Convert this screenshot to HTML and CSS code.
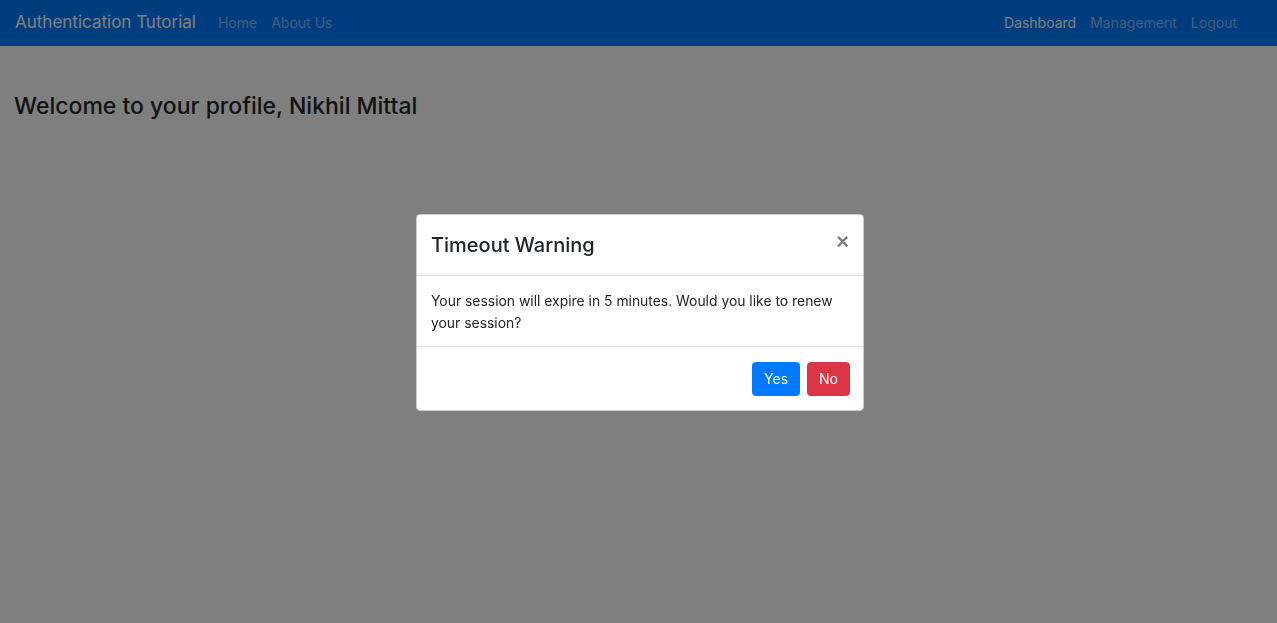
FILE: index.html
```html
<!DOCTYPE html>
<html lang="en">
<head>
<meta charset="utf-8">
<title>Authentication Tutorial</title>
<link rel="stylesheet" href="styles.css">
</head>
<body>
<nav class="navbar">
  <div class="nav-left">
    <a class="brand" href="#">Authentication Tutorial</a>
    <a class="nav-link" href="#">Home</a>
    <a class="nav-link" href="#">About Us</a>
  </div>
  <div class="nav-right">
    <a class="nav-link active" href="#">Dashboard</a>
    <a class="nav-link" href="#">Management</a>
    <a class="nav-link" href="#">Logout</a>
  </div>
</nav>
<main class="container">
  <h4 class="welcome">Welcome to your profile, Nikhil Mittal</h4>
</main>

<div class="backdrop">
  <div class="modal">
    <div class="modal-header">
      <h5 class="modal-title">Timeout Warning</h5>
      <button class="close" type="button">×</button>
    </div>
    <div class="modal-body">
      Your session will expire in 5 minutes. Would you like to renew your session?
    </div>
    <div class="modal-footer">
      <button class="btn btn-primary" type="button">Yes</button>
      <button class="btn btn-danger" type="button">No</button>
    </div>
  </div>
</div>
</body>
</html>
```

FILE: styles.css
```css
* { box-sizing: border-box; }
html, body { height: 100%; }
body {
  margin: 0;
  font-family: Inter, "Liberation Sans", Arial, sans-serif;
  font-size: 14.4px;
  line-height: 1.5;
  color: #212529;
  background: #fff;
  overflow: hidden;
}
a { text-decoration: none; }

.navbar {
  height: 46px;
  background: #007bff;
  display: flex;
  align-items: center;
  justify-content: space-between;
  padding: 0 33px 2px 15px;
}
.nav-left, .nav-right { display: flex; align-items: center; }
.brand {
  color: #fff;
  font-size: 17px;
  margin-right: 15px;
  line-height: 1;
}
.nav-link {
  color: rgba(255,255,255,.5);
  font-size: 14px;
  padding: 0 7px;
}
.nav-link.active { color: #fff; }

.container { padding: 47px 14px 0; }
.welcome {
  margin: 0;
  font-size: 23px;
  font-weight: 500;
  line-height: 1.2;
}

.backdrop {
  position: fixed;
  inset: 0;
  background: rgba(0,0,0,.5);
  display: flex;
  align-items: center;
  justify-content: center;
  padding: 2px 0 0 3px;
}
.modal {
  width: 448px;
  background: #fff;
  border: 1px solid rgba(0,0,0,.2);
  border-radius: 4.5px;
  display: flex;
  flex-direction: column;
}
.modal-header {
  display: flex;
  align-items: center;
  justify-content: space-between;
  padding: 15px 14px 14px 14px;
  border-bottom: 1px solid #dee2e6;
}
.modal-title {
  margin: 0;
  font-size: 20px;
  font-weight: 500;
  line-height: 31px;
}
.close {
  border: 0;
  background: transparent;
  padding: 0;
  margin-top: -8px;
  font-family: "Liberation Sans", Arial, sans-serif;
  font-size: 22px;
  font-weight: 700;
  line-height: 1;
  color: #000;
  opacity: .5;
}
.modal-body {
  padding: 14px 14px 12px 14px;
  font-size: 13.9px;
  line-height: 22px;
}
.modal-footer {
  display: flex;
  justify-content: flex-end;
  align-items: center;
  gap: 7px;
  padding: 15px 13px 14px;
  border-top: 1px solid #dee2e6;
}
.btn {
  border: 1px solid transparent;
  border-radius: 3.6px;
  color: #fff;
  font-family: inherit;
  font-size: 14px;
  line-height: 22px;
  padding: 5px 11px;
  height: 34px;
}
.btn-primary { background: #007bff; border-color: #007bff; }
.btn-danger { background: #dc3545; border-color: #dc3545; }
```
